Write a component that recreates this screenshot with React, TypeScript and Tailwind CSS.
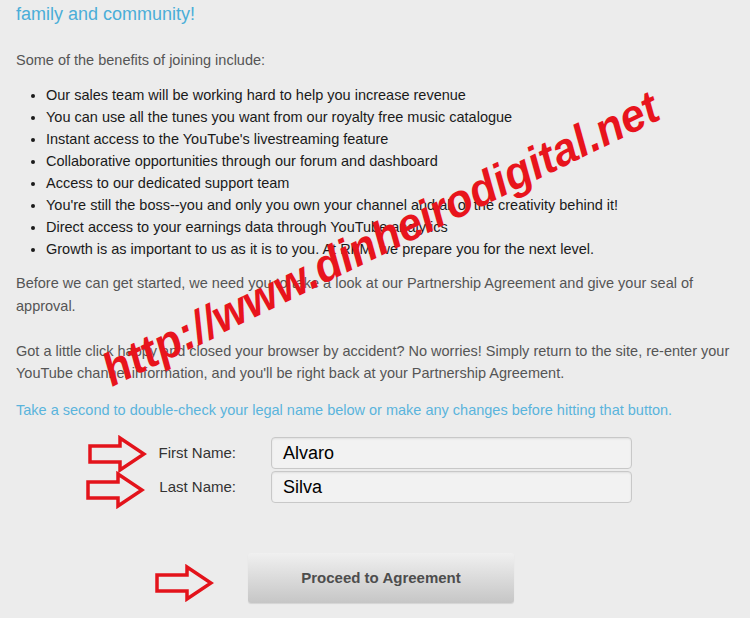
import React from "react";

function Arrow({ className }: { className: string }) {
  return (
    <svg className={className} width="60" height="38" viewBox="0 0 60 38" fill="none">
      <polygon
        points="3,11 33,11 33,3 57,19 33,35 33,27 3,27"
        stroke="#e3131b"
        strokeWidth="3.5"
        strokeLinejoin="miter"
        fill="none"
      />
    </svg>
  );
}

const items = [
  "Our sales team will be working hard to help you increase revenue",
  "You can use all the tunes you want from our royalty free music catalogue",
  "Instant access to the YouTube's livestreaming feature",
  "Collaborative opportunities through our forum and dashboard",
  "Access to our dedicated support team",
  "You're still the boss--you and only you own your channel and all of the creativity behind it!",
  "Direct access to your earnings data through YouTube analytics",
  "Growth is as important to us as it is to you. At RFM, we prepare you for the next level.",
];

export default function App() {
  return (
    <div
      className="relative w-[750px] h-[618px] overflow-hidden bg-[#ececec] px-4"
      style={{ fontFamily: '"Liberation Sans", Arial, sans-serif' }}
    >
      <h2 className="pt-[3px] text-[18px] leading-[22px] text-[#4aaed8]">family and community!</h2>
      <p className="mt-6 text-[14.5px] leading-[22px] text-[#555]">Some of the benefits of joining include:</p>
      <ul className="mt-[13px] list-disc pl-[30px] text-[14.5px] leading-[22px] text-[#1a1a1a]">
        {items.map((t) => (
          <li key={t}>{t}</li>
        ))}
      </ul>
      <p className="mt-3 text-[14.5px] leading-[23px] text-[#555]">
        Before we can get started, we need you to take a look at our Partnership Agreement and give your seal of
        approval.
      </p>
      <p className="mt-[22px] text-[14.5px] leading-[22px] text-[#555]">
        Got a little click happy and closed your browser by accident? No worries! Simply return to the site, re-enter your
        YouTube channel information, and you'll be right back at your Partnership Agreement.
      </p>
      <p className="mt-[15px] text-[14.5px] leading-[22px] text-[#5ab4dc]">
        Take a second to double-check your legal name below or make any changes before hitting that button.
      </p>

      <div className="mt-4 grid grid-cols-[220px_361px] gap-x-[35px] gap-y-[2px]">
        <label className="flex items-center justify-end text-[15px] text-[#333]">First Name:</label>
        <div className="flex h-[32px] items-center rounded-[4px] border border-[#c8c8c8] bg-[#f2f2f2] px-[11px] text-[18px] text-black shadow-[inset_0_1px_2px_rgba(0,0,0,0.08)]">
          Alvaro
        </div>
        <label className="flex items-center justify-end text-[15px] text-[#333]">Last Name:</label>
        <div className="flex h-[32px] items-center rounded-[4px] border border-[#c8c8c8] bg-[#f2f2f2] px-[11px] text-[18px] text-black shadow-[inset_0_1px_2px_rgba(0,0,0,0.08)]">
          Silva
        </div>
      </div>

      <div className="mt-[50px] flex pl-[232px]">
        <button className="h-[50px] w-[266px] rounded-[3px] bg-gradient-to-b from-[#f0f0f0] to-[#c6c6c6] text-[15px] font-bold text-[#4d4d4d] shadow-[0_1px_1px_rgba(0,0,0,0.1)]">
          Proceed to Agreement
        </button>
      </div>

      <Arrow className="absolute left-[87px] top-[435px]" />
      <Arrow className="absolute left-[85px] top-[471px]" />
      <Arrow className="absolute left-[154px] top-[564px]" />

      <div
        className="pointer-events-none absolute left-[112px] top-[348px] whitespace-nowrap text-[46px] font-bold italic leading-none text-[#e8141c]"
        style={{ transform: "rotate(-26deg) scaleX(0.95)", transformOrigin: "0 39px" }}
      >
        http://www.dinheirodigital.net
      </div>
    </div>
  );
}
